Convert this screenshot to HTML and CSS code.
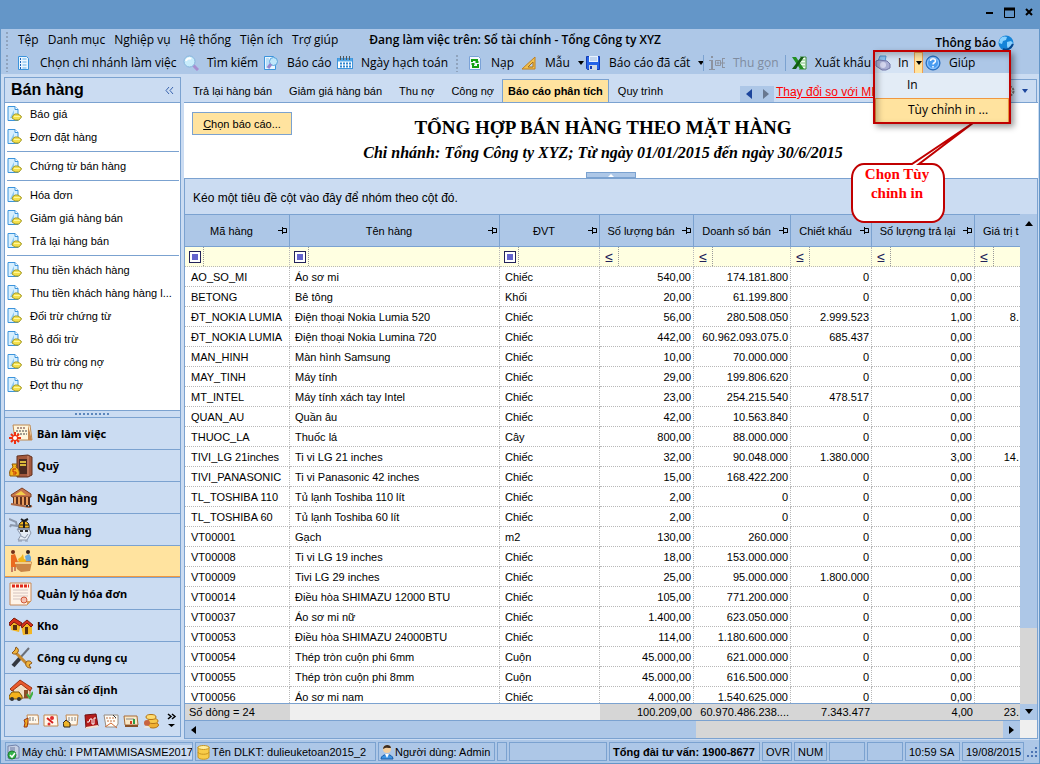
FILE: index.html
```html
<!DOCTYPE html>
<html lang="vi">
<head>
<meta charset="utf-8">
<title>Bán hàng</title>
<link rel="stylesheet" href="styles.css">
</head>
<body>
<svg class="defs" aria-hidden="true">
  <symbol id="doc" viewBox="0 0 15 16">
    <path d="M1 .5h7l3 3V14.500H1z" fill="#d6efff" stroke="#3c94dc"/><path d="M8 .5v3h3" fill="#fff" stroke="#3c94dc"/>
    <path d="M3 12l4-8v8z" fill="#8cc8f0"/>
    <path d="M6 9.500l2-1.500h3l3 2 .5 1-2.500 3H8l-3-2z" fill="#f4e04c" stroke="#a39a28"/><path d="M7 10.500h6" stroke="#fff79a"/>
  </symbol>
  <symbol id="pin" viewBox="0 0 10 8"><path d="M0 3.500h4M4.500 0v7M4.500 1.500h4v4M4 5.500h5" fill="none" stroke="#000"/></symbol>
  <symbol id="eq" viewBox="0 0 12 12"><rect x=".5" y=".5" width="11" height="11" fill="#fff" stroke="#23235a"/><rect x="3" y="3" width="6" height="6" fill="#6464cc"/></symbol>
  <symbol id="caret" viewBox="0 0 6 4"><path d="M0 0h6L3 4z" fill="currentColor"/></symbol>
</svg>
<div class="window">
  <header class="titlebar">
    <button aria-label="Thu nhỏ"><svg width="11" height="11"><path d="M2 6h7" stroke="#000" stroke-width="2"/></svg></button>
    <button aria-label="Phóng to"><svg width="11" height="11"><path d="M.5 1v9.500h10V1" fill="none" stroke="#000"/><path d="M0 2h11" stroke="#000" stroke-width="3"/></svg></button>
    <button aria-label="Đóng"><svg width="11" height="11"><path d="M2 2l6 6M8 2l-6 6" stroke="#000" stroke-width="2"/></svg></button>
  </header>
  <nav class="menubar">
    <span class="grip"></span>
    <button>Tệp</button><button>Danh mục</button><button>Nghiệp vụ</button><button>Hệ thống</button><button>Tiện ích</button><button>Trợ giúp</button>
    <strong class="context">Đang làm việc trên: Sổ tài chính - Tổng Công ty XYZ</strong>
    <a class="notice" href="#thong-bao">Thông báo
      <svg width="16" height="16" viewBox="0 0 16 16"><circle cx="8" cy="8" r="7.500" fill="#1584d8"/><path d="M2 4c2-3 5-3 7-2l-1 3-3 1-1 3-3-1zM9 7l4-1 2 2-2 5-3 1-1-3z" fill="#8ad2ff"/><path d="M5 14c4 2 8-1 10-5" stroke="#07478f" fill="none" stroke-width="2"/></svg></a>
  </nav>
  <div class="toolbar">
    <span class="grip"></span>
    <button class="branch"><svg width="16" height="16" viewBox="0 0 16 16"><path d="M2.500 1.500h8l2 2v11h-10z" fill="#eaf6ff" stroke="#3c94dc"/><path d="M4 4h1m-1 3h1m-1 3h1m-1 3h1" stroke="#1a5fb4" stroke-width="2"/><path d="M6.500 4h4m-4 3h4m-4 3h4m-4 3h4" stroke="#68b2e8"/></svg>Chọn chi nhánh làm việc</button>
    <button><svg width="16" height="16" viewBox="0 0 16 16"><path d="M10 10l5 5" stroke="#a78ed0" stroke-width="3"/><circle cx="6.500" cy="6.500" r="5.500" fill="#c8ecfb" stroke="#86b5dc"/><path d="M3 6c1-3 4-3 5-2" stroke="#fff" fill="none" stroke-width="2"/></svg>Tìm kiếm</button>
    <button><svg width="16" height="16" viewBox="0 0 16 16"><path d="M1.500 1.500h9l2 2v11h-11z" fill="#eaf6ff" stroke="#3c94dc"/><path d="M3 3h3v10H3z" fill="#b9def8"/><circle cx="10.500" cy="6.500" r="4" fill="#bfe6fa" stroke="#5aa4dc"/><path d="M8 9l-3 4" stroke="#9a86cc" stroke-width="3"/></svg>Báo cáo</button>
    <button><svg width="16" height="16" viewBox="0 0 16 16"><rect x=".5" y="3.500" width="15" height="10" fill="#fff" stroke="#3c94dc"/><path d="M1 5h14" stroke="#4fa6e8" stroke-width="3"/><path d="M3.500 1v4m3-4v4m3-4v4m3-4v4" stroke="#555"/><path d="M3 8.500h11M3 11.500h11" stroke="#2f86cf" stroke-width="2" stroke-dasharray="2 1"/></svg>Ngày hạch toán</button>
    <span class="grip"></span>
    <button><svg width="16" height="16" viewBox="0 0 16 16"><path d="M2.500 1.500h9l2 2v11h-11z" fill="#f3f8ff" stroke="#7aa2d8"/><path d="M5 7V5h5v2M8.500 7h3M11 9v3H6V9.500M4.500 9h3" fill="none" stroke="#12a012" stroke-width="2"/></svg>Nạp</button>
    <button><svg width="16" height="16" viewBox="0 0 16 16"><path d="M1 14L14 2v12z" fill="#f0c050" stroke="#c08020"/><path d="M7 12l5-5v5z" fill="#bcd2ee" stroke="#a87018"/></svg>Mẫu<svg class="caret"><use href="#caret"/></svg></button>
    <button><svg width="16" height="16" viewBox="0 0 16 16"><path d="M1.500 1.500h13v13h-12l-1-1z" fill="#2462e8" stroke="#143cb4"/><path d="M4 1h9v6H4z" fill="#e8f2ff"/><path d="M5 3h7M5 5h7" stroke="#9ab8e0"/><path d="M4 10h8v5H4z" fill="#cfd8e4"/><path d="M5 11h2v3H5z" fill="#143cb4"/></svg>Báo cáo đã cất<svg class="caret"><use href="#caret"/></svg></button>
    <button class="ruled" disabled><svg width="16" height="16" viewBox="0 0 16 16"><path d="M2 1h2v2H2zM0 5h4v9h2v1H0v-1h2V6H0z" fill="#8c93a0"/><path d="M6.500 5.500h5v5h-5zM7.500 8h3M9 6.500v3M12 8h1.500M13.500 3v10M13 3.500h3M13 8h3M13 12.500h3" fill="none" stroke="#8c93a0"/></svg>Thu gọn</button>
    <button class="ruled"><svg width="16" height="16" viewBox="0 0 16 16"><path d="M9 2h6v12H8" fill="#f2fff2" stroke="#3c8c3c"/><path d="M10 5h4m-4 3h4m-4 3h4" stroke="#7cc07c"/><path d="M1 2h4l8 12H9z" fill="#229022"/><path d="M10 2h3L5 14H1z" fill="#145c14"/></svg>Xuất khẩu</button>
    <div class="print">
      <button class="print-main"><svg width="16" height="16" viewBox="0 0 16 16"><path d="M3 6l2-5h6l-1 6" fill="#8cc4f2" stroke="#4e94d2"/><path d="M1 6l3-1 8 1 3 3v4l-4 2H7L1 11z" fill="#a9aed4" stroke="#7277a8"/><ellipse cx="8" cy="10" rx="3" ry="3" fill="#d4d6ee"/></svg>In</button>
      <button class="print-drop" aria-label="Tùy chọn in"><svg class="caret"><use href="#caret"/></svg></button>
      <div class="menu"><button>In</button><button class="active">Tùy chỉnh in ...</button></div>
      <svg class="bubble" viewBox="0 0 128 104"><path d="M14 44H62L123 3 69 44H82a12 14 0 0 1 12 14V88a12 14 0 0 1-12 14H14A12 14 0 0 1 2 88V58A12 14 0 0 1 14 44z" fill="#fff" stroke="#c00000" stroke-width="2"/></svg>
      <p class="tip">Chọn Tùy<br>chỉnh in</p>
      <span class="frame"></span>
    </div>
    <button class="help"><svg width="16" height="16" viewBox="0 0 16 16"><circle cx="8" cy="8" r="7" fill="#4a9cf0" stroke="#1d62b4"/><circle cx="8" cy="8" r="5.500" fill="none" stroke="#9acbff"/><path d="M5.500 6c0-3 5-3 5 0 0 2-2.500 1.500-2.500 3.500M8 11v1.500" fill="none" stroke="#fff" stroke-width="1.500"/></svg>Giúp</button>
  </div>

  <div class="workspace">
    <aside class="side">
      <div class="side-head"><h2>Bán hàng</h2><button aria-label="Thu gọn"><svg width="9" height="9"><path d="M4 1L1 4.500 4 8M8 1L5 4.500 8 8" fill="none" stroke="#3a64ae"/></svg></button></div>
      <div class="tasks">
        <ul>
          <li><a href="#"><svg><use href="#doc"/></svg>Báo giá</a></li>
          <li><a href="#"><svg><use href="#doc"/></svg>Đơn đặt hàng</a></li>
        </ul>
        <ul><li><a href="#"><svg><use href="#doc"/></svg>Chứng từ bán hàng</a></li></ul>
        <ul>
          <li><a href="#"><svg><use href="#doc"/></svg>Hóa đơn</a></li>
          <li><a href="#"><svg><use href="#doc"/></svg>Giảm giá hàng bán</a></li>
          <li><a href="#"><svg><use href="#doc"/></svg>Trả lại hàng bán</a></li>
        </ul>
        <ul>
          <li><a href="#"><svg><use href="#doc"/></svg>Thu tiền khách hàng</a></li>
          <li><a href="#"><svg><use href="#doc"/></svg>Thu tiền khách hàng hàng l...</a></li>
          <li><a href="#"><svg><use href="#doc"/></svg>Đối trừ chứng từ</a></li>
          <li><a href="#"><svg><use href="#doc"/></svg>Bỏ đối trừ</a></li>
          <li><a href="#"><svg><use href="#doc"/></svg>Bù trừ công nợ</a></li>
          <li><a href="#"><svg><use href="#doc"/></svg>Đợt thu nợ</a></li>
        </ul>
      </div>
      <div class="splitter"><span></span></div>
      <nav class="modules">
        <button><svg viewBox="0 0 24 24"><path d="M4 3h17l2 15H6z" fill="#fff6dc" stroke="#c08a50"/><path d="M19 3l4 15h-4z" fill="#c88850"/><path d="M8 6h9" stroke="#633" stroke-dasharray="2 1"/><path d="M7 9h11M8 12h10" stroke="#444" stroke-dasharray="2 1"/><path d="M6 10v12M0 16h12M2 12l8 8M10 12l-8 8" stroke="#f03010" stroke-width="2"/><circle cx="6" cy="16" r="2" fill="#fff"/></svg>Bàn làm việc</button>
        <button><svg viewBox="0 0 24 24"><path d="M8 2l11-1 4 2v18l-4 2H8z" fill="#a3583c" stroke="#63301e"/><path d="M10 5h8v15h-8z" fill="#4b2a20"/><path d="M11 8h6m-6 3h6" stroke="#d8b83c" stroke-width="2"/><path d="M19 2v20" stroke="#d69272"/><path d="M3 10h5l-1 3c3 2 4 5 3 9H1c-1-4 0-7 3-9z" fill="#f4b41c" stroke="#8c5808"/><path d="M7 15H4v3h3v2H4" fill="none" stroke="#c03000"/></svg>Quỹ</button>
        <button><svg viewBox="0 0 24 24"><path d="M2 9L13 2l9 6v3H3z" fill="#c8764c" stroke="#804020"/><path d="M6 9l6-4 5 4z" fill="#f3cf4c"/><path d="M4 11h17v8H4z" fill="#5f301c"/><path d="M6 11v8m4-8v8m4-8v8m4-8v8" stroke="#e89c5c" stroke-width="2"/><path d="M2 18l18 3 3-1" stroke="#ad6844" stroke-width="2" fill="none"/><path d="M17 20h6" stroke="#333" stroke-width="2" stroke-dasharray="2 1"/></svg>Ngân hàng</button>
        <button><svg viewBox="0 0 24 24"><path d="M8 11h12l2 4-4 7H9l3-5z" fill="#e4ebf4" stroke="#8b97ab"/><path d="M10 10c-1-4 2-7 5-7s6 3 5 7z" fill="#f5b820" stroke="#29231c"/><path d="M15 3v7M12 1l3 2 4-2" fill="none" stroke="#1c1c1c" stroke-width="2"/><path d="M11 7h9" stroke="#1c1c1c"/><path d="M0 1l7 3 1 4-6-1-1 2M9 11h12" fill="none" stroke="#8b97ab" stroke-width="2"/><path d="M11 13h3m2 0h3" stroke="#333" stroke-width="2"/><path d="M12 18l4 2 3-4M9 23h4m3 0h3" fill="none" stroke="#8b97ab"/></svg>Mua hàng</button>
        <button class="current"><svg viewBox="0 0 24 24"><circle cx="4" cy="3" r="2" fill="#743018"/><path d="M2 6l4-1 3 8-2 2 1 3H2z" fill="#ea6a20"/><path d="M3 18v5M6 18v4" stroke="#c78060" stroke-width="2"/><path d="M6 14l4-2 11 0 2 1-2 9-9 1-4-3z" fill="#c98648"/><path d="M6 14h16" stroke="#f2cd8c" stroke-width="2"/><path d="M9 10l3-2 2-3 1 5 3 1-2 2h-6z" fill="#f0b418"/><circle cx="19" cy="3" r="2" fill="#382018"/><path d="M16 7l4-2 2 3v4h-5z" fill="#68a8dc"/></svg>Bán hàng</button>
        <button><svg viewBox="0 0 24 24"><path d="M1 1h21v18l-4 4H1z" fill="#fff4e8" stroke="#c88a58"/><path d="M3 4h17" stroke="#e02818" stroke-width="3" stroke-dasharray="3 1"/><path d="M4 8h15M4 11h15M4 14h15M4 17h8" stroke="#d4c4c0"/><circle cx="15" cy="18" r="3" fill="#f4c0b0" stroke="#d05838"/><path d="M18 23v-4h4z" fill="#d89c60"/></svg>Quản lý hóa đơn</button>
        <button><svg viewBox="0 0 24 24"><path d="M1 8l5-4 6 5-2 9-8-2z" fill="#f3b623"/><path d="M0 9l5-5 8 5-2 3-6-4-4 4z" fill="#d6301c" stroke="#7c1c10"/><path d="M4 11h4v5H4z" fill="#563010"/><path d="M12 12l6-5 5 5v8l-9 1z" fill="#f3b623"/><path d="M12 11l6-5 6 5-2 2-4-4-5 5z" fill="#d6301c" stroke="#7c1c10"/><path d="M16 13h3v7h-3z" fill="#563010"/></svg>Kho</button>
        <button><svg viewBox="0 0 24 24"><path d="M20 2L11 12" stroke="#6b6f78" stroke-width="2"/><path d="M12 11l-8 9" stroke="#343840" stroke-width="4"/><path d="M6 6l12 12" stroke="#c98a2c" stroke-width="3"/><path d="M3 7c2 2 5 1 6-1s0-4-2-5L6 4zM17 16c-1 4 1 6 5 6l-2-3 3-2c-1-2-4-3-6-1z" fill="#f0b43c" stroke="#8a5418"/></svg>Công cụ dụng cụ</button>
        <button><svg viewBox="0 0 24 24"><path d="M4 10l8-6 9 6v10H6z" fill="#f2dfc4" stroke="#a06030"/><path d="M1 11L11 2l12 8-2 3-9-7-9 7z" fill="#ea5a2c" stroke="#9c3414"/><path d="M15 12h4v8h-4z" fill="#8c4e28"/><path d="M0 18l3-4h7l3 4v3H0z" fill="#f4b21c" stroke="#7a5408"/><circle cx="3" cy="21" r="2" fill="#333"/><circle cx="10" cy="21" r="2" fill="#333"/><path d="M18 16l3 4 3-6" stroke="#40b040" fill="none" stroke-width="2"/></svg>Tài sản cố định</button>
      </nav>
      <div class="shortcuts">
        <button aria-label="Lương"><svg viewBox="0 0 16 16"><path d="M4 2h11l1 9H5z" fill="#fff8ec" stroke="#c08850"/><path d="M6 5h6M6 7h7" stroke="#777" stroke-dasharray="2 1"/><path d="M1 7l4-2v4l-1 5H1l1-4z" fill="#f0a820" stroke="#9a3410"/></svg></button>
        <button aria-label="Thuế"><svg viewBox="0 0 16 16"><path d="M1 2h13l1 11H1z" fill="#fff8ec" stroke="#c08850"/><path d="M4 5l6 5" stroke="#d42020" stroke-width="2"/><circle cx="9" cy="5" r="2" fill="#e02c2c"/><circle cx="6" cy="11" r="1.500" fill="#e02c2c"/></svg></button>
        <button aria-label="Giá thành"><svg viewBox="0 0 16 16"><path d="M3 2h12l-1 10H4z" fill="#fff8ec" stroke="#c08850"/><path d="M5 5h8M5 7h8" stroke="#888" stroke-dasharray="2 1"/><path d="M0 10l3-3 4 3v4H1z" fill="#eeb52a" stroke="#2e241a"/></svg></button>
        <button aria-label="Sổ cái"><svg viewBox="0 0 16 16"><path d="M2 2l11-1 2 12-12 2z" fill="#b41c1c" stroke="#701010"/><path d="M4 9h2l1-3h2v5h2V5h2" fill="none" stroke="#fff"/><path d="M3 15l12-2" stroke="#f4e4d4" stroke-width="2"/></svg></button>
        <button aria-label="Hợp đồng"><svg viewBox="0 0 16 16"><path d="M1 2h14v9l-2 3H3z" fill="#fffdf8" stroke="#988c80"/><path d="M3 5h10M4 8h8" stroke="#c07040" stroke-dasharray="2 1"/><path d="M2 14l6-4 6 5" fill="none" stroke="#d46c34"/><path d="M10 2l3 3" stroke="#333"/></svg></button>
        <button aria-label="Ngân sách"><svg viewBox="0 0 16 16"><path d="M1 3h13l1 9H2z" fill="#f8e8c8" stroke="#a86c38"/><path d="M3 6h8" stroke="#888"/><path d="M8 11V8" stroke="#d83c20" stroke-width="2"/><path d="M11 11V6" stroke="#2b9c45" stroke-width="2"/><path d="M2 13h13" stroke="#875028" stroke-width="2"/></svg></button>
        <button aria-label="Tổng hợp"><svg viewBox="0 0 16 16"><ellipse cx="10" cy="12" rx="5.500" ry="3" fill="#f0b030" stroke="#b47414"/><ellipse cx="10" cy="8" rx="5" ry="2.500" fill="#f8c848" stroke="#b47414"/><ellipse cx="8" cy="4" rx="5" ry="2.500" fill="#ffdc70" stroke="#b47414"/><circle cx="4" cy="10" r="3" fill="#c86440"/><path d="M1 15c0-3 6-3 6 0z" fill="#e8e4e0"/></svg></button>
        <button aria-label="Thêm"><svg viewBox="0 0 16 16"><path d="M5 1l3 2.500L5 6M9 1l3 2.500L9 6" fill="none" stroke="#000" stroke-width="1.500"/><path d="M5 11h7l-3.500 3z"/></svg></button>
      </div>
    </aside>

    <main class="main">
      <div class="tabs">
        <button>Trả lại hàng bán</button><button>Giảm giá hàng bán</button><button>Thu nợ</button><button>Công nợ</button><button class="selected">Báo cáo phân tích</button><button>Quy trình</button>
        <span class="tab-scroll"><button aria-label="Trước"><svg width="6" height="10"><path d="M6 0v10L0 5z" fill="#1c459c"/></svg></button><button aria-label="Sau"><svg width="6" height="10"><path d="M0 0v10l6-5z" fill="#687890"/></svg></button></span>
        <a class="news" href="#">Thay đổi so với MI</a>
        <button class="gear" aria-label="Thiết lập"><svg width="14" height="14" viewBox="0 0 14 14"><circle cx="7" cy="7" r="4.500" fill="#eef1f5" stroke="#777" stroke-width="2" stroke-dasharray="2.500 1"/><circle cx="7" cy="7" r="2" fill="#cbdcf2" stroke="#777"/></svg><svg class="caret"><use href="#caret"/></svg></button>
      </div>
      <section class="report-head">
        <button class="choose"><u>C</u>họn báo cáo...</button>
        <div class="titles"><h1>TỔNG HỢP BÁN HÀNG THEO MẶT HÀNG</h1><p>Chi nhánh: Tổng Công ty XYZ; Từ ngày 01/01/2015 đến ngày 30/6/2015</p></div>
        <button class="collapse" aria-label="Thu gọn tiêu đề"><svg width="6" height="3"><path d="M0 3h6L3 0z" fill="#fff"/></svg></button>
      </section>
      <section class="grid">
        <p class="group-by">Kéo một tiêu đề cột vào đây để nhóm theo cột đó.</p>
        <div class="sheet">
          <table>
            <colgroup><col class="c1"><col class="c2"><col class="c3"><col class="c4"><col class="c5"><col class="c6"><col class="c7"><col></colgroup>
            <thead>
              <tr>
                <th><div><span>Mã hàng</span><svg><use href="#pin"/></svg></div></th><th><div><span>Tên hàng</span><svg><use href="#pin"/></svg></div></th><th><div><span>ĐVT</span><svg><use href="#pin"/></svg></div></th><th><div><span>Số lượng bán</span><svg><use href="#pin"/></svg></div></th><th><div><span>Doanh số bán</span><svg><use href="#pin"/></svg></div></th><th><div><span>Chiết khấu</span><svg><use href="#pin"/></svg></div></th><th><div><span>Số lượng trả lại</span><svg><use href="#pin"/></svg></div></th><th class="cut">Giá trị t</th>
              </tr>
              <tr class="filter">
                <td><div><svg><use href="#eq"/></svg><input aria-label="Lọc mã hàng"></div></td><td><div><svg><use href="#eq"/></svg><input aria-label="Lọc tên hàng"></div></td><td><div><svg><use href="#eq"/></svg><input aria-label="Lọc ĐVT"></div></td><td><div><b>≤</b><input aria-label="Lọc số lượng bán"></div></td><td><div><b>≤</b><input aria-label="Lọc doanh số bán"></div></td><td><div><b>≤</b><input aria-label="Lọc chiết khấu"></div></td><td><div><b>≤</b><input aria-label="Lọc số lượng trả lại"></div></td><td><div><b>≤</b><input aria-label="Lọc giá trị trả lại"></div></td>
              </tr>
            </thead>
            <tbody>
              <tr><td>AO_SO_MI<td>Áo sơ mi<td>Chiếc<td>540,00<td>174.181.800<td>0<td>0,00<td></tr>
              <tr><td>BETONG<td>Bê tông<td>Khối<td>20,00<td>61.199.800<td>0<td>0,00<td></tr>
              <tr><td>ĐT_NOKIA LUMIA<td>Điện thoại Nokia Lumia 520<td>Chiếc<td>56,00<td>280.508.050<td>2.999.523<td>1,00<td>8.</tr>
              <tr><td>ĐT_NOKIA LUMIA<td>Điện thoại Nokia Lumina 720<td>Chiếc<td>442,00<td>60.962.093.075.0<td>685.437<td>0,00<td></tr>
              <tr><td>MAN_HINH<td>Màn hình Samsung<td>Chiếc<td>10,00<td>70.000.000<td>0<td>0,00<td></tr>
              <tr><td>MAY_TINH<td>Máy tính<td>Chiếc<td>29,00<td>199.806.620<td>0<td>0,00<td></tr>
              <tr><td>MT_INTEL<td>Máy tính xách tay Intel<td>Chiếc<td>23,00<td>254.215.540<td>478.517<td>0,00<td></tr>
              <tr><td>QUAN_AU<td>Quần âu<td>Chiếc<td>42,00<td>10.563.840<td>0<td>0,00<td></tr>
              <tr><td>THUOC_LA<td>Thuốc lá<td>Cây<td>800,00<td>88.000.000<td>0<td>0,00<td></tr>
              <tr><td>TIVI_LG 21inches<td>Ti vi LG 21 inches<td>Chiếc<td>32,00<td>90.048.000<td>1.380.000<td>3,00<td>14.</tr>
              <tr><td>TIVI_PANASONIC<td>Ti vi Panasonic 42 inches<td>Chiếc<td>15,00<td>168.422.200<td>0<td>0,00<td></tr>
              <tr><td>TL_TOSHIBA 110<td>Tủ lạnh Toshiba 110 lít<td>Chiếc<td>2,00<td>0<td>0<td>0,00<td></tr>
              <tr><td>TL_TOSHIBA 60<td>Tủ lạnh Toshiba 60 lít<td>Chiếc<td>2,00<td>0<td>0<td>0,00<td></tr>
              <tr><td>VT00001<td>Gạch<td>m2<td>130,00<td>260.000<td>0<td>0,00<td></tr>
              <tr><td>VT00008<td>Ti vi LG 19 inches<td>Chiếc<td>18,00<td>153.000.000<td>0<td>0,00<td></tr>
              <tr><td>VT00009<td>Tivi LG 29 inches<td>Chiếc<td>25,00<td>95.000.000<td>1.800.000<td>0,00<td></tr>
              <tr><td>VT00014<td>Điều hòa SHIMAZU 12000 BTU<td>Chiếc<td>105,00<td>771.200.000<td>0<td>0,00<td></tr>
              <tr><td>VT00037<td>Áo sơ mi nữ<td>Chiếc<td>1.400,00<td>623.050.000<td>0<td>0,00<td></tr>
              <tr><td>VT00053<td>Điều hòa SHIMAZU 24000BTU<td>Chiếc<td>114,00<td>1.180.600.000<td>0<td>0,00<td></tr>
              <tr><td>VT00054<td>Thép tròn cuộn phi 6mm<td>Cuộn<td>45.000,00<td>621.000.000<td>0<td>0,00<td></tr>
              <tr><td>VT00055<td>Thép tròn cuộn phi 8mm<td>Cuộn<td>45.000,00<td>616.500.000<td>0<td>0,00<td></tr>
              <tr><td>VT00056<td>Áo sơ mi nam<td>Chiếc<td>4.000,00<td>1.540.625.000<td>0<td>0,00<td></tr>
            </tbody>
          </table>
        </div>
        <table class="totals">
          <colgroup><col class="c1"><col class="c2"><col class="c3"><col class="c4"><col class="c5"><col class="c6"><col class="c7"><col></colgroup>
          <tbody><tr><td>Số dòng = 24<td class="blank" colspan="2"><td>100.209,00<td>60.970.486.238....<td>7.343.477<td>4,00<td>23.</tr></tbody>
        </table>
        <div class="vscroll"><svg width="8" height="5"><path d="M0 5h8L4 0z"/></svg><span class="track"></span><svg width="8" height="5"><path d="M0 0h8L4 5z"/></svg></div>
        <div class="hscroll"><svg width="5" height="8"><path d="M5 0v8L0 4z"/></svg><span class="track"></span><svg width="5" height="8"><path d="M0 0v8l5-4z"/></svg></div>
        <div class="corner"></div>
      </section>
    </main>
  </div>

  <footer class="status">
    <span class="server"><svg width="16" height="16" viewBox="0 0 16 16"><path d="M2 2l8-1 3 2v11l-10 1-1-1z" fill="#c6d0e4" stroke="#7282aa"/><path d="M4 4h5M4 6h5" stroke="#6c78a0"/><circle cx="6" cy="11" r="4" fill="#34b44a" stroke="#1d8030"/><path d="M4 11l2 2 3-4" stroke="#fff" fill="none" stroke-width="1.500"/></svg>Máy chủ:&nbsp;<span class="host">I PMTAM\MISASME2017</span></span>
    <span><svg width="16" height="16" viewBox="0 0 16 16"><path d="M2 3v10c0 3 11 3 11 0V3z" fill="#f8cc48" stroke="#c89420"/><ellipse cx="7.500" cy="3.500" rx="5.500" ry="2" fill="#ffeea0" stroke="#c89420"/><path d="M2 8c0 3 11 3 11 0" stroke="#c89420" fill="none"/></svg>Tên DLKT: dulieuketoan2015_2</span>
    <span><svg width="16" height="16" viewBox="0 0 16 16"><path d="M2 15c0-6 12-6 12 0z" fill="#3c94e4" stroke="#1c5ca8"/><circle cx="8" cy="5" r="4" fill="#f4ce9c"/><path d="M4 5c0-5 8-5 8-1-3 0-5-1-8 1z" fill="#3c2c20"/><path d="M6 10l2 4 2-4z" fill="#fff"/></svg>Người dùng: Admin</span>
    <span></span><span></span>
    <span class="wide"><b>Tổng đài tư vấn: 1900-8677</b></span>
    <span class="wide">OVR</span><span class="wide">NUM</span><span></span><span></span><span class="wide">10:59 SA</span><span class="wide">19/08/2015</span>
    <svg class="resize" width="12" height="12"><path d="M9 2h2M5 6h2m2 0h2M1 10h2m2 0h2m2 0h2" stroke="#4c74b4" stroke-width="2"/></svg>
  </footer>
</div>
</body>
</html>
```
FILE: styles.css
```css
* { box-sizing: border-box; }
body { margin: 0; font: 11px/14px "Liberation Sans", Arial, sans-serif; color: #000; }
button { border: 0; padding: 0; margin: 0; background: none; font: inherit; color: inherit; white-space: nowrap; }
a { color: inherit; text-decoration: none; white-space: nowrap; }
ul, p, h1, h2 { margin: 0; padding: 0; list-style: none; }
svg { flex: none; display: block; }
.defs { position: absolute; width: 0; height: 0; }
.caret { width: 6px; height: 4px; }

.window { height: 100vh; display: flex; flex-direction: column; background: #cbdcf2; border: 1px solid #6496c8; border-top: 0; overflow: hidden; }
.titlebar { height: 29px; flex: none; background: #6496c8; display: flex; justify-content: flex-end; align-items: center; gap: 9px; padding: 0 4px 4px 0; }
.titlebar svg { display: block; }

.grip { width: 4px; height: 18px; background: radial-gradient(circle, #8fa3bd 1px, transparent 1px) 0 0 / 4px 4px; }
.menubar, .toolbar { flex: none; background: #adc7e7; font: 12px/16px "Open Sans", "Noto Sans", sans-serif; }
.menubar { height: 22px; display: flex; align-items: center; gap: 9px; padding: 0 25px 0 4px; }
.context { margin-left: 22px; white-space: nowrap; font-weight: 600; }
.notice { margin-left: auto; display: flex; align-items: center; gap: 2px; font-weight: 600; padding-top: 6px; }
.toolbar { height: 23px; display: grid; align-items: center; padding-left: 4px;
  grid-template-columns: 11px 167px 80px 74px 118px 12px 54px 64px 118px 82px 90px 50px 1fr; }
.toolbar button { display: flex; align-items: center; gap: 8px; }
.toolbar button:disabled { color: #7f8ca0; }
.toolbar .ruled { border-left: 1px solid #7ba2d0; padding-left: 5px; }

.print { position: relative; height: 22px; display: flex; align-items: stretch; }
.print .print-main { width: 39px; gap: 7px; background: #d5e3f4; }
.print .print-drop { width: 9px; background: #ffe39f; border: 1px solid #f0a050; justify-content: center; }
.menu { position: absolute; z-index: 2; top: 21px; left: 0; width: 134px; background: #e3ecf6; }
.menu button { display: block; width: 100%; height: 25px; padding-left: 32px; text-align: left; }
.menu .active { background: #ffe39f; border: 1px solid #f09840; height: 25px; }
.frame { position: absolute; z-index: 3; left: -2px; top: -2px; width: 138px; height: 74px; border: 2px solid #c00000; box-shadow: 3px 3px 6px #0006, inset 3px 3px 6px #0004; pointer-events: none; }
.bubble { position: absolute; z-index: 1; left: -25px; top: 68px; width: 128px; height: 104px; }
.tip { position: absolute; z-index: 2; left: -24px; top: 113px; width: 92px; text-align: center; font: bold 15px/19px "Liberation Serif", serif; color: #f00; }

.workspace { flex: 1; min-height: 0; display: flex; gap: 3px; padding: 3px 1px 1px 3px; }
.side { width: 177px; flex: none; border: 1px solid #7ba2d0; display: flex; flex-direction: column; margin-bottom: 2px; }
.side-head { height: 25px; flex: none; display: flex; align-items: center; justify-content: space-between; padding: 0 6px; border-bottom: 1px solid #7ba2d0; }
.side-head h2 { font: bold 16px/20px "Liberation Sans", Arial, sans-serif; }
.tasks { flex: 1; min-height: 0; overflow: hidden; background: #fff; padding: 0 1px 0 2px; }
.tasks ul + ul { border-top: 1px solid #7ba2d0; margin-top: 2px; padding-top: 3px; }
.tasks a { height: 23px; display: flex; align-items: center; gap: 8px; padding-bottom: 1px; }
.tasks svg { width: 15px; height: 16px; }
.splitter { height: 7px; flex: none; border-top: 1px solid #7ba2d0; display: flex; justify-content: center; align-items: center; }
.splitter span { width: 36px; height: 2px; background: repeating-linear-gradient(90deg, #5c86bc 0 2px, transparent 2px 4px); }
.modules button { width: 100%; height: 32px; display: flex; align-items: center; gap: 4px; padding-left: 4px; border-top: 1px solid #7ba2d0; font: bold 11px/16px "Noto Sans", sans-serif; }
.modules svg { width: 24px; height: 24px; }
.modules .current { background: #ffe39f; border-bottom: 1px solid #f09840; }
.shortcuts { height: 31px; flex: none; border-top: 1px solid #7ba2d0; display: flex; align-items: center; justify-content: flex-end; gap: 4px; padding-right: 1px; }
.shortcuts svg { width: 16px; height: 16px; }

.main { flex: 1; min-width: 0; display: flex; flex-direction: column; }
.tabs { height: 26px; flex: none; display: flex; align-items: flex-end; border-bottom: 1px solid #7ba2d0; font-size: 11px; }
.tabs > button { height: 23px; padding: 0 8px 0 9px; }
.tabs .selected { background: #ffe39f; border: 1px solid #7ba2d0; border-bottom: 0; font-weight: bold; padding: 0 5px; }
.tab-scroll { margin-left: auto; flex: none; width: 34px; height: 16px; background: #adc7e7; display: flex; justify-content: space-around; align-items: center; }
.news { margin-left: 2px; width: 216px; flex: none; font-size: 12px; line-height: 20px; color: #f00; text-decoration: underline; }
.tabs .gear { display: flex; align-items: center; gap: 6px; border: 1px solid #7ba2d0; border-bottom: 0; color: #1c459c; margin-right: 1px; }

.report-head { position: relative; height: 75px; flex: none; background: #fff; display: grid; align-items: start; padding: 9px 24px 8px 8px; }
.choose { grid-area: 1 / 1; justify-self: start; width: 100px; height: 23px; background: #ffe39f; border: 1px solid #7ba2d0; z-index: 1; }
.titles { grid-area: 1 / 1; text-align: center; font: italic bold 16px/24px "Liberation Serif", serif; padding-top: 3px; }
.titles h1 { font: bold 19px/26px "Liberation Serif", serif; }
.collapse { position: absolute; left: 402px; bottom: 0; width: 50px; height: 6px; background: #adc7e7; border: 1px solid #7ba2d0; display: flex; align-items: center; justify-content: center; }

.grid { flex: 1; min-height: 0; display: grid; grid-template-columns: minmax(0, 1fr) 17px; grid-template-rows: 35px minmax(0, 1fr) 17px 18px; border: 1px solid #7ba2d0; }
.group-by { grid-column: 1 / 3; padding: 12px 8px 0; font-size: 12px; }
.sheet { overflow: hidden; background: #fff; }
table { width: 100%; table-layout: fixed; border-collapse: separate; border-spacing: 0; }
.c1 { width: 105px; }
.c2 { width: 210px; }
.c3 { width: 100px; }
.c4 { width: 94px; }
.c5 { width: 97px; }
.c6 { width: 81px; }
.c7 { width: 103px; }
th { height: 33px; padding: 0; background: #adc7e7; font-weight: normal; border: solid #7ba2d0; border-width: 1px 1px 1px 0; overflow: hidden; white-space: nowrap; }
th div { display: flex; align-items: center; }
th span { flex: 1; }
th svg { width: 10px; height: 8px; margin-right: 1px; }
th.cut { text-align: left; padding-left: 8px; border-right: 0; }
td { height: 20px; padding: 0 2px 0 6px; border: dotted #b8b8b8; border-width: 0 1px 1px 0; white-space: nowrap; overflow: hidden; }
td:nth-child(n+2) { padding-left: 5px; }
td:nth-child(n+4) { text-align: right; }
td:last-child { border-right: 0; padding-right: 1px; }
.filter td, .filter td:nth-child(n+2) { background: #ffffe1; padding: 0; }
.filter div { display: flex; align-items: center; height: 19px; }
.filter svg { width: 12px; height: 12px; margin: 0 2px 0 4px; }
.filter b { width: 18px; text-align: center; font: 14px/18px "Liberation Sans", sans-serif; color: #23235a; flex: none; }
.filter input { flex: 1; min-width: 0; height: 19px; border: 0; border-left: 1px dotted #999; background: none; padding: 0; }
.totals { background: #d6d6d6; border-top: 1px solid #7ba2d0; }
.totals td { height: 16px; border: 0; text-align: right; }
.totals td:first-child { text-align: left; padding-left: 4px; }
.totals .blank { background: #efefef; }
.vscroll { grid-area: 2 / 2 / 4 / 3; background: #adc7e7; display: flex; flex-direction: column; align-items: center; padding: 7px 0 6px; }
.vscroll .track { flex: 1; width: 100%; margin-bottom: 5px; background: linear-gradient(#adc7e7 84%, #d6d6d6 84%); }
.hscroll { background: #adc7e7; display: flex; align-items: center; padding: 0 6px; border-top: 1px solid #7ba2d0; }
.hscroll .track { flex: 1; height: 100%; margin-right: 6px; background: linear-gradient(90deg, #adc7e7 62%, #d6d6d6 62%); }
.corner { background: #efefef; }

.status { height: 23px; flex: none; background: #adc7e7; display: grid; align-items: center; gap: 2px; padding: 0 1px 0 4px; font-size: 11px;
  grid-template-columns: 188px 181px 117px 10px 98px 151px 30px 33px 36px 36px 55px 1fr 12px; }
.status > span { height: 19px; border: 1px solid #7ba2d0; display: flex; align-items: center; overflow: hidden; white-space: nowrap; }
.status > .wide { padding-left: 3px; }
.host { background: #cbdcf2; }
```
